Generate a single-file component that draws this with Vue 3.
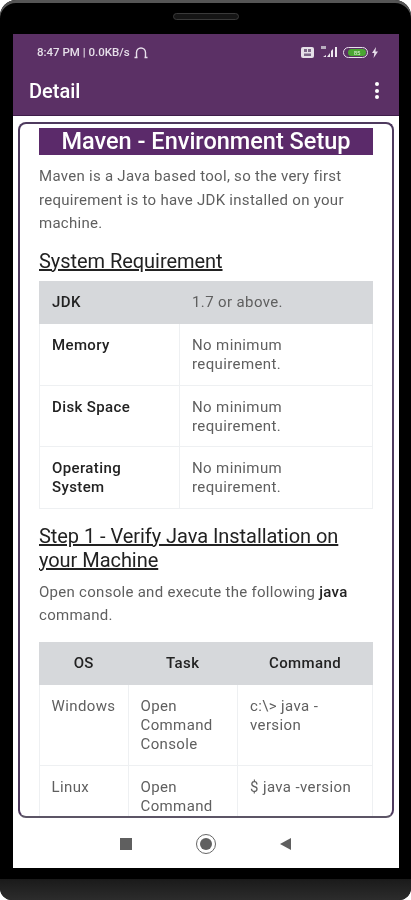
<template>
  <div class="device">
    <div class="top-edge"><div class="speaker"></div></div>
    <div class="screen">
      <div class="appbar">
        <div class="status">
          <span class="status-text">8:47 PM | 0.0KB/s</span>
          <svg class="headset" width="14" height="13" viewBox="0 0 14 13">
            <path d="M2.5 11V6.5a4.5 4.5 0 0 1 9 0V11" fill="none" stroke="#e8e0ec" stroke-width="1.4" />
            <path d="M0.5 11.5h3M10.5 11.5h3" stroke="#e8e0ec" stroke-width="1.6" />
          </svg>
          <span class="spacer"></span>
          <svg width="13" height="11" viewBox="0 0 13 11">
            <rect width="13" height="11" rx="2" fill="#e6e0e8" />
            <rect x="3" y="2" width="3" height="3" fill="#7d6888" />
            <rect x="7" y="2" width="3" height="3" fill="#7d6888" />
            <rect x="3" y="6.5" width="7" height="2.5" fill="#7d6888" />
          </svg>
          <svg class="signal" width="19" height="12" viewBox="0 0 19 12">
            <rect x="1" y="0" width="5" height="3" fill="#b9adbf" />
            <path d="M3 11l3-2v2zM7 11l3-4v4zM11 11V5l2-2v8zM15 11V1h2v10z" fill="#eee8f0" />
          </svg>
          <span class="battery"><span class="battery-fill">85</span></span>
          <svg width="6" height="11" viewBox="0 0 6 11">
            <path d="M4 0L0 6h2.3L1.6 11 6 4.5H3.4z" fill="#e8e0ec" />
          </svg>
        </div>
        <div class="toolbar">
          <span class="title">Detail</span>
          <span class="dots"><i></i><i></i><i></i></span>
        </div>
      </div>

      <div class="body">
        <div class="card">
          <h1>Maven - Environment Setup</h1>
          <p class="intro">Maven is a Java based tool, so the very first requirement is to have JDK installed on your machine.</p>
          <h2 class="req-title">System Requirement</h2>
          <table class="req-table">
            <tbody>
              <tr v-for="(row, i) in requirements" :key="row[0]" :class="{ shaded: i === 0 }">
                <th>{{ row[0] }}</th>
                <td>{{ row[1] }}</td>
              </tr>
            </tbody>
          </table>
          <h2 class="step-title">Step 1 - Verify Java Installation on your Machine</h2>
          <p class="console">Open console and execute the following <b>java</b> command.</p>
          <table class="os-table">
            <thead>
              <tr class="shaded">
                <th>OS</th>
                <th>Task</th>
                <th>Command</th>
              </tr>
            </thead>
            <tbody>
              <tr v-for="row in systems" :key="row[0]">
                <td v-for="cell in row" :key="cell">{{ cell }}</td>
              </tr>
            </tbody>
          </table>
        </div>

        <div class="navbar">
          <span class="nav-square"></span>
          <span class="nav-circle"><span></span></span>
          <span class="nav-back"></span>
        </div>
      </div>
    </div>
    <div class="bottom-edge"></div>
  </div>
</template>

<script setup>
const requirements = [
  ['JDK', '1.7 or above.'],
  ['Memory', 'No minimum requirement.'],
  ['Disk Space', 'No minimum requirement.'],
  ['Operating System', 'No minimum requirement.']
]

const systems = [
  ['Windows', 'Open Command Console', 'c:\\> java -version'],
  ['Linux', 'Open Command Terminal', '$ java -version']
]
</script>

<style>
html, body {
  margin: 0;
  background: #fff;
}
</style>

<style scoped>
.device {
  width: 411px;
  height: 900px;
  background: #000;
  border-radius: 16px 16px 12px 12px;
  box-shadow: inset 0 3px 0 #555;
  display: flex;
  flex-direction: column;
  overflow: hidden;
  font-family: Roboto, "Liberation Sans", sans-serif;
  filter: blur(0.4px);
}

.top-edge {
  height: 34px;
  flex: none;
  display: flex;
  justify-content: center;
  padding-top: 13px;
  box-sizing: border-box;
}

.speaker {
  width: 66px;
  height: 7px;
  border-radius: 4px;
  background: #151515;
  border: 1px solid #3a3a3a;
  box-sizing: border-box;
}

.screen {
  margin: 0 12px 0 13px;
  height: 834px;
  flex: none;
  display: flex;
  flex-direction: column;
  background: #fff;
}

.appbar {
  height: 82px;
  flex: none;
  background: #5b3065;
  color: #fff;
  border-bottom: 1px solid #3f1d4a;
  box-sizing: border-box;
}

.status {
  display: flex;
  align-items: center;
  height: 36px;
  padding: 0 21px 0 24px;
  gap: 4px;
}

.status-text {
  font-size: 11.5px;
  font-weight: 500;
  color: #e6dfe9;
  white-space: nowrap;
}

.spacer {
  flex: 1;
}

.signal {
  margin-left: 2px;
}

.battery {
  width: 25px;
  height: 11px;
  border: 1px solid #e8e0ec;
  border-radius: 6px;
  box-sizing: border-box;
  padding: 1px;
  display: flex;
}

.battery-fill {
  flex: 1;
  margin-left: 3px;
  background: #4aa532;
  border-radius: 4px;
  font-size: 6px;
  line-height: 7px;
  text-align: center;
  color: #dff3d8;
}

.toolbar {
  display: flex;
  align-items: center;
  justify-content: space-between;
  height: 41px;
  padding: 0 20px 0 16px;
}

.title {
  font-size: 20px;
  font-weight: 500;
}

.dots {
  display: flex;
  flex-direction: column;
  gap: 2.5px;
}

.dots i {
  display: block;
  width: 4px;
  height: 4px;
  border-radius: 50%;
  background: #fff;
}

.body {
  flex: 1;
  min-height: 0;
  display: flex;
  flex-direction: column;
  padding: 6px 5px 0;
}

.card {
  height: 696px;
  flex: none;
  box-sizing: border-box;
  border: 2px solid #4e3a5e;
  border-bottom-color: #5c5566;
  border-radius: 8px;
  padding: 4px 19px 0;
  overflow: hidden;
  color: #5f5f5f;
}

h1 {
  margin: 0;
  height: 27px;
  background: #5b2a6a;
  color: #fff;
  font-size: 23.5px;
  font-weight: 500;
  line-height: 27px;
  text-align: center;
  white-space: nowrap;
}

p {
  margin: 0;
  font-size: 15px;
  line-height: 23.5px;
  letter-spacing: 0.28px;
}

.intro {
  margin-top: 10px;
}

h2 {
  margin: 0;
  font-size: 20px;
  font-weight: 400;
  line-height: 24px;
  letter-spacing: -0.05px;
  color: #222;
  text-decoration: underline;
}

.req-title {
  margin-top: 13px;
}

.step-title {
  margin-top: 15px;
}

.console {
  margin-top: 9px;
}

b {
  font-weight: 500;
  color: #222;
}

table {
  width: 334px;
  border-collapse: collapse;
  table-layout: fixed;
  font-size: 15px;
  line-height: 19px;
  letter-spacing: 0.38px;
}

th, td {
  padding: 12px 12px 10.5px;
  text-align: left;
  vertical-align: top;
  border: 1px solid #eef0f2;
  overflow-wrap: break-word;
}

th {
  font-weight: 500;
  color: #222;
}

.shaded th, .shaded td {
  padding-top: 11.25px;
  padding-bottom: 11.25px;
  background: #d6d8db;
  border-color: #d6d8db;
}

.req-table {
  margin-top: 8px;
}

.req-table th {
  width: 115px;
}

.req-table .shaded td {
  color: #5f5f5f;
}

.os-table {
  margin-top: 14px;
}

.os-table th {
  text-align: center;
}

.os-table th:nth-child(1) {
  width: 63.5px;
}

.os-table td:first-child {
  padding-left: 11.5px;
  padding-right: 0;
  width: 75.5px;
}

.os-table th:nth-child(2), .os-table td:nth-child(2) {
  width: 84.5px;
}

.navbar {
  flex: 1;
  display: flex;
  align-items: center;
  justify-content: center;
  gap: 64px;
  padding: 2px 2px 0 0;
}

.nav-square {
  width: 12px;
  height: 12px;
  background: #5f5f5f;
}

.nav-circle {
  width: 18px;
  height: 18px;
  border: 1px solid #666;
  border-radius: 50%;
  display: flex;
  align-items: center;
  justify-content: center;
}

.nav-circle span {
  width: 12px;
  height: 12px;
  border-radius: 50%;
  background: #5f5f5f;
}

.nav-back {
  width: 0;
  height: 0;
  border-style: solid;
  border-width: 6.5px 11px 6.5px 0;
  border-color: transparent #5f5f5f transparent transparent;
}

.bottom-edge {
  margin-top: 11px;
  flex: 1;
  background: linear-gradient(#1a1a1a, #2c2c2c);
}
</style>
